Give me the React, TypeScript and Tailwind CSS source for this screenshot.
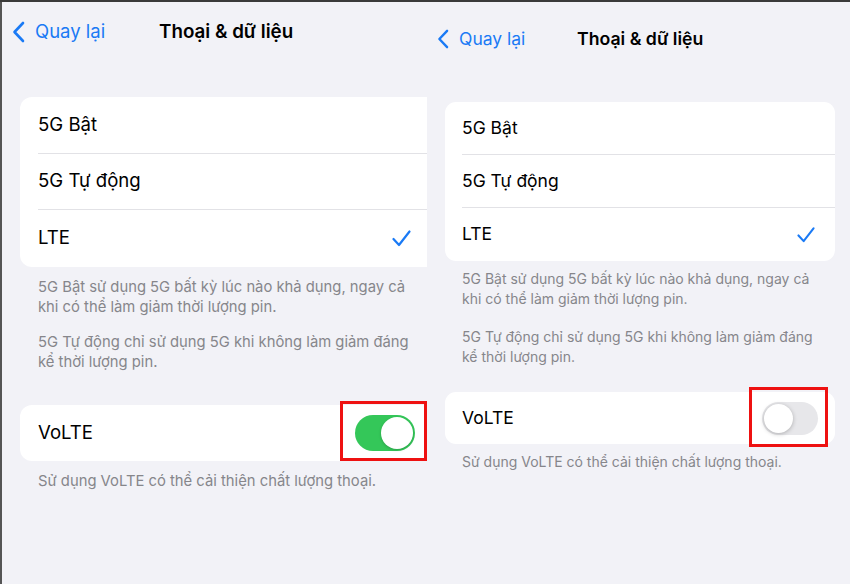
import React from 'react';

type Cfg = {
  nav: string;
  backWrap: string;
  chevron: string;
  label: string;
  title: string;
  card: string;
  row: string;
  rowInner: string;
  rowText: string;
  footer: string;
  gap: string;
  volteCard: string;
  volteRow: string;
  volteFooter: string;
  check: string;
};

const left: Cfg = {
  nav: 'h-[60px] pl-[10px]',
  backWrap: 'w-[147px] gap-[10px]',
  chevron: 'w-[13px] h-[22px]',
  label: 'text-[18.5px]',
  title: 'text-[18.8px]',
  card: 'mt-[35px] ml-[18px] rounded-l-[12px]',
  row: 'pl-[18px]',
  rowInner: 'h-[56.5px] pr-[16px]',
  rowText: 'text-[18.6px]',
  footer: 'mt-[10px] pl-[36px] pr-[6px] text-[14.8px] leading-[20.5px]',
  gap: 'h-[14px]',
  volteCard: 'mt-[32px] ml-[18px] rounded-l-[12px] h-[56px] pl-[18px] pr-[12px]',
  volteRow: 'text-[18.6px]',
  volteFooter: 'mt-[10px] pl-[36px] text-[14.8px] leading-[20px]',
  check: 'w-[19px] h-[17px]',
};

const right: Cfg = {
  nav: 'h-[74px] pl-[10px]',
  backWrap: 'w-[140px] gap-[10px]',
  chevron: 'w-[12px] h-[20px]',
  label: 'text-[17.5px]',
  title: 'text-[17.7px]',
  card: 'mt-[26px] ml-[18px] mr-[15px] rounded-[11px]',
  row: 'pl-[17px]',
  rowInner: 'h-[53px] pr-[20px]',
  rowText: 'text-[17.5px]',
  footer: 'mt-[8px] pl-[35px] pr-[6px] text-[14px] leading-[19.5px]',
  gap: 'h-[19px]',
  volteCard: 'mt-[26px] ml-[18px] mr-[15px] rounded-[11px] h-[52px] pl-[17px] pr-[17px]',
  volteRow: 'text-[17.5px]',
  volteFooter: 'mt-[8px] pl-[35px] text-[14px] leading-[19.5px]',
  check: 'w-[18px] h-[16px]',
};

function Chevron({ className }: { className: string }) {
  return (
    <svg viewBox="0 0 13 22" className={className} fill="none">
      <path d="M11 2 L2.5 11 L11 20" stroke="#1a7af5" strokeWidth="2.6" strokeLinecap="round" strokeLinejoin="round" />
    </svg>
  );
}

function Check({ className }: { className: string }) {
  return (
    <svg viewBox="0 0 19 17" className={className} fill="none">
      <path d="M1.5 9 L7 15 L17.5 1.5" stroke="#1a7af5" strokeWidth="2.2" strokeLinecap="round" strokeLinejoin="round" />
    </svg>
  );
}

function Toggle({ on }: { on: boolean }) {
  if (on) {
    return (
      <div className="relative">
        <div className="w-[60px] h-[36px] rounded-full bg-[#34c759] flex items-center justify-end pr-[2px]">
          <div className="w-[32px] h-[32px] rounded-full bg-white shadow-[0_1px_3px_rgba(0,0,0,0.2)]" />
        </div>
        <div className="absolute -left-[15px] -right-[12px] -top-[14px] -bottom-[10px] border-[3px] border-[#ee1111]" />
      </div>
    );
  }
  return (
    <div className="relative">
      <div className="w-[56px] h-[33px] rounded-full bg-[#e7e7ea] flex items-center pl-[2px]">
        <div className="w-[29px] h-[29px] rounded-full bg-white shadow-[0_1px_4px_rgba(0,0,0,0.25)]" />
      </div>
      <div className="absolute -left-[13px] -right-[10px] -top-[15px] -bottom-[12px] border-[3px] border-[#ee1111]" />
    </div>
  );
}

function Panel({ c, on, className }: { c: Cfg; on: boolean; className: string }) {
  const rows = ['5G Bật', '5G Tự động', 'LTE'];
  return (
    <div className={`bg-[#f2f2f7] overflow-hidden ${className}`}>
      <div className={`flex items-center ${c.nav}`}>
        <div className={`flex items-center ${c.backWrap}`}>
          <Chevron className={c.chevron} />
          <span className={`text-[#1a7af5] ${c.label}`}>Quay lại</span>
        </div>
        <span className={`font-semibold text-black ${c.title}`}>Thoại &amp; dữ liệu</span>
      </div>

      <div className={`bg-white ${c.card}`}>
        {rows.map((r, i) => (
          <div key={r} className={c.row}>
            <div
              className={`flex items-center justify-between ${c.rowInner} ${
                i < rows.length - 1 ? 'border-b border-[#e2e2e6]' : ''
              }`}
            >
              <span className={`text-black ${c.rowText}`}>{r}</span>
              {i === 2 && <Check className={c.check} />}
            </div>
          </div>
        ))}
      </div>

      <div className={`text-[#86868b] ${c.footer}`}>
        <p>
          5G Bật sử dụng 5G bất kỳ lúc nào khả dụng, ngay cả
          <br />
          khi có thể làm giảm thời lượng pin.
        </p>
        <div className={c.gap} />
        <p>
          5G Tự động chỉ sử dụng 5G khi không làm giảm đáng
          <br />
          kể thời lượng pin.
        </p>
      </div>

      <div className={`bg-white flex items-center justify-between ${c.volteCard}`}>
        <span className={`text-black ${c.volteRow}`}>VoLTE</span>
        <Toggle on={on} />
      </div>

      <p className={`text-[#86868b] ${c.volteFooter}`}>Sử dụng VoLTE có thể cải thiện chất lượng thoại.</p>
    </div>
  );
}

export default function App() {
  return (
    <div className="w-[850px] h-[584px] bg-[#3a3a3a] pt-[2px] flex overflow-hidden font-['Inter',sans-serif] antialiased">
      <div className="w-[2px] bg-[#555555]" />
      <Panel c={left} on={true} className="w-[425px] h-full" />
      <Panel c={right} on={false} className="flex-1 h-full" />
    </div>
  );
}
